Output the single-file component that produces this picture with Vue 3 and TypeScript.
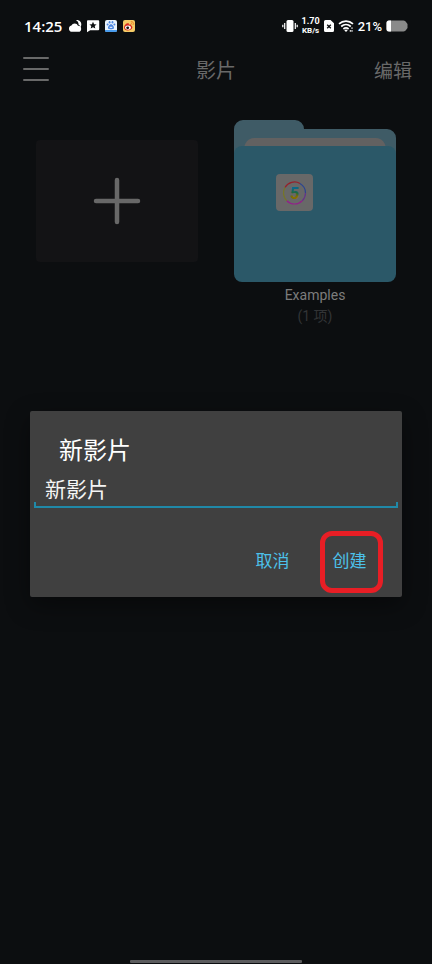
<script setup lang="ts">
import { ref } from 'vue'

interface Folder {
  name: string
  count: number
}

const folders: Folder[] = [{ name: 'Examples', count: 1 }]
const movieName = ref('新影片')
const dialogOpen = ref(true)
const battery = 21
</script>

<template>
  <div class="screen">
    <div class="status">
      <span class="clock">14:25</span>
      <svg class="glyph" width="14" height="14" viewBox="0 0 14 14" aria-hidden="true">
        <path d="M8 1.200C11 .6 13.600 3 13.300 5.800c0 1-.4 1.800-1 2.500A3.500 3.500 0 0 0 10.500 5.600 4.500 4.500 0 0 0 8 1.200Z" fill="#fff" />
        <path d="M4 12.800a3.200 3.200 0 0 1-.6-6.300 3.700 3.700 0 0 1 6.600.3 3 3 0 0 1 .3 6Z" fill="#fff" />
      </svg>
      <svg class="glyph" width="14" height="14" viewBox="0 0 14 14" aria-hidden="true">
        <path d="M1.800 1.300h10.400a1 1 0 0 1 1 1v8a1 1 0 0 1-1 1H4.200L1 13.300V2.300a1 1 0 0 1 .8-1Z" fill="#fff" />
        <path d="M7 2.800l1.100 2.400 2.500.2-1.900 1.700.6 2.500L7 8.300 4.700 9.600l.6-2.500-1.900-1.700 2.500-.2Z" fill="#0c0e10" />
      </svg>
      <svg class="glyph" width="14" height="14" viewBox="0 0 14 14" aria-hidden="true">
        <rect x="1" y="1" width="12" height="12" rx="2" fill="#e9f2fc" />
        <path d="M1 11h12v.500a1.500 1.500 0 0 1-1.500 1.500h-9A1.500 1.500 0 0 1 1 11.500Z" fill="#4a9cec" />
        <g fill="#4b86e2">
          <ellipse cx="5.600" cy="3.200" rx=".9" ry="1.300" />
          <ellipse cx="8.500" cy="3.200" rx=".9" ry="1.300" />
          <circle cx="3.600" cy="5.600" r="1" />
          <circle cx="10.400" cy="5.600" r="1" />
          <path d="M7 5.300c1.500 0 3.200 2.500 3 3.800-.2 1.300-1.700 1.100-3 1.100s-2.800.2-3-1.100c-.2-1.300 1.500-3.800 3-3.800Z" />
        </g>
        <path d="M5.700 8.300h2.600" stroke="#fff" stroke-width="1" />
      </svg>
      <svg class="glyph" width="14" height="14" viewBox="0 0 14 14" aria-hidden="true">
        <rect x="1" y="1" width="12" height="12" rx="2" fill="#f5cb67" />
        <path d="M2 8.400C2 6 5 3.600 6.500 4.300c.6.300.5 1 .3 1.400 1.300-.5 2.700-.4 2.500 1.100 2.300.9.800 4.700-3.500 4.700C3.600 11.500 2 10.200 2 8.400Z" fill="#d9291f" />
        <ellipse cx="6" cy="8.600" rx="2.900" ry="2.100" fill="#fff" />
        <circle cx="5.700" cy="8.800" r="1.400" fill="#18110e" />
        <path d="M8.800 2.700c2-.3 3.200 1.100 2.900 3M8.900 4.300c.9-.1 1.400.5 1.200 1.300" fill="none" stroke="#e8791d" stroke-width=".9" />
      </svg>
      <span class="spacer"></span>
      <svg class="glyph" width="16" height="14" viewBox="0 0 16 14" aria-hidden="true">
        <rect x="4.500" y="1" width="7" height="12" rx="1.500" fill="#fff" />
        <path d="M2.700 4v6M13.300 4v6M.8 5.800v2.400M15.200 5.800v2.400" stroke="#fff" stroke-width="1.200" />
      </svg>
      <span class="speed"><span class="rate">1.70</span><span>KB/s</span></span>
      <svg class="glyph" width="10" height="12" viewBox="0 0 10 12" aria-hidden="true">
        <path d="M1.500 0H6.500L10 3.300V10.500A1.500 1.500 0 0 1 8.500 12h-7A1.500 1.500 0 0 1 0 10.500v-9A1.500 1.500 0 0 1 1.500 0Z" fill="#fff" />
        <path d="M3.200 4.700l3.600 3.600M6.800 4.700L3.200 8.300" stroke="#0c0e10" stroke-width="1.300" />
      </svg>
      <svg class="glyph" width="16" height="14" viewBox="0 0 16 14" aria-hidden="true">
        <g fill="none" stroke="#fff" stroke-width="1.700">
          <path d="M1 4.800c4-3.700 10-3.700 14 0" />
          <path d="M3.200 7.500c2.800-2.500 6.800-2.500 9.600 0" />
          <path d="M5.400 10c1.500-1.300 3.700-1.300 5.200 0" />
        </g>
        <path d="M6.300 11.200a2.600 2.600 0 0 1 3.400 0L8 13Z" fill="#fff" />
        <path d="M14 8.300v1.700M14 11v1.800M12.300 11v1.800" stroke="#fff" stroke-width="1" />
      </svg>
      <span class="percent">{{ battery }}%</span>
      <svg class="battery" width="22" height="12" viewBox="0 0 22 12" aria-hidden="true">
        <path d="M3 .5h14.500a3 3 0 0 1 2.700 1.700L21.500 4v4l-1.300 1.800a3 3 0 0 1-2.700 1.700H3a2.500 2.500 0 0 1-2.500-2.500V3A2.500 2.500 0 0 1 3 .5Z" fill="#8a8a8a" />
        <path d="M3 .5h2v11H3A2.500 2.500 0 0 1 .5 9V3A2.500 2.500 0 0 1 3 .5Z" fill="#fff" />
      </svg>
    </div>

    <header class="bar">
      <button class="menu" type="button" aria-label="菜单">
        <span></span><span></span><span></span>
      </button>
      <h1>影片</h1>
      <button class="edit" type="button">编辑</button>
    </header>

    <main class="grid">
      <button class="add" type="button" aria-label="新建">
        <svg width="48" height="48" viewBox="0 0 48 48" aria-hidden="true">
          <path d="M24 3v42M3 24h42" stroke="#686868" stroke-width="4.500" stroke-linecap="round" />
        </svg>
      </button>
      <a v-for="f in folders" :key="f.name" class="folder" href="#">
        <svg viewBox="0 0 162 162" aria-hidden="true">
          <defs>
            <linearGradient id="digit" gradientUnits="userSpaceOnUse" x1="0" y1="67" x2="0" y2="79">
              <stop offset="0.100" stop-color="#08688c" />
              <stop offset="0.500" stop-color="#1f6a3c" />
              <stop offset="0.800" stop-color="#857000" />
            </linearGradient>
          </defs>
          <path d="M0 40V9a9 9 0 0 1 9-9H61a9 9 0 0 1 9 9H153a9 9 0 0 1 9 9V40Z" fill="#3f5b66" />
          <path d="M10 30c0-7 4-12 10-12H142c6 0 10 5 10 12Z" fill="#626161" />
          <rect y="26" width="162" height="136" rx="8" fill="#2b5868" />
          <rect x="42" y="54" width="37" height="37" rx="4" fill="#686868" />
          <g fill="none" stroke-width="1.200">
            <path d="M50.970 67.500A11 11 0 0 1 66 63.470" stroke="#96202b" />
            <path d="M66 63.470A11 11 0 0 1 71.500 73" stroke="#2c4590" />
            <path d="M71.500 73A11 11 0 0 1 68.280 80.780" stroke="#643488" />
            <path d="M68.280 80.780A11 11 0 0 1 52.720 80.780" stroke="#93208a" />
            <path d="M52.720 80.780A11 11 0 0 1 50.970 67.500" stroke="#767626" />
          </g>
          <text x="60.500" y="79" class="digit" text-anchor="middle" fill="url(#digit)">5</text>
        </svg>
        <span class="name">{{ f.name }}</span>
        <span class="count">({{ f.count }} 项)</span>
      </a>
    </main>

    <div class="home"></div>

    <div v-if="dialogOpen" class="overlay">
      <form class="dialog" role="dialog" aria-labelledby="dialog-title" @submit.prevent="dialogOpen = false">
        <h2 id="dialog-title"><label for="movie-name">新影片</label></h2>
        <div class="field">
          <input id="movie-name" v-model="movieName" type="text" autocomplete="off" />
        </div>
        <div class="actions">
          <button type="button" @click="dialogOpen = false">取消</button>
          <button class="create" type="submit">创建</button>
        </div>
      </form>
    </div>
  </div>
</template>

<style>
body {
  background: #0c0e10;
}
</style>

<style scoped>
.screen,
.screen * {
  box-sizing: border-box;
}
.screen {
  position: relative;
  display: flex;
  flex-direction: column;
  min-height: 100vh;
  background: #0c0e10;
  color: #696969;
  font-family: Roboto, "Noto Sans CJK SC", sans-serif;
}
button,
input {
  margin: 0;
  padding: 0;
  border: 0;
  background: none;
  color: inherit;
  font: inherit;
}
h1,
h2 {
  margin: 0;
}
.status {
  display: flex;
  align-items: center;
  gap: 4px;
  height: 52px;
  padding: 0 24px;
  color: #fff;
  font-weight: 500;
}
.clock {
  margin-right: 2px;
  font-family: "Open Sans", sans-serif;
  font-size: 15px;
  font-weight: 600;
}
.glyph,
.battery {
  flex: none;
}
.spacer {
  flex: 1;
}
.speed {
  display: flex;
  flex-direction: column;
  align-items: center;
  font-size: 8px;
  font-weight: 700;
  line-height: 9px;
}
.rate {
  font-size: 9px;
}
.percent {
  font-size: 13px;
}
.bar {
  display: grid;
  grid-template-columns: 1fr auto 1fr;
  align-items: center;
  height: 34px;
  padding: 0 20px;
}
.menu {
  display: flex;
  flex-direction: column;
  gap: 9px;
  width: 26px;
  margin-left: 3px;
}
.menu span {
  height: 2px;
  border-radius: 1px;
  background: #696969;
}
.bar h1 {
  font-size: 20px;
  font-weight: 400;
}
.edit {
  justify-self: end;
  font-size: 19px;
}
.grid {
  flex: 1;
  display: grid;
  grid-template-columns: 1fr 1fr;
  align-items: start;
  gap: 36px;
  padding: 34px 36px;
}
.add {
  display: flex;
  align-items: center;
  justify-content: center;
  margin-top: 20px;
  aspect-ratio: 4 / 3;
  border-radius: 4px;
  background: #131315;
}
.folder {
  display: flex;
  flex-direction: column;
  align-items: center;
  color: #7c7c7c;
  text-decoration: none;
}
.folder svg {
  display: block;
  width: 100%;
}
.digit {
  font: 700 16px Roboto, sans-serif;
}
.name {
  margin-top: 2px;
  font-size: 14px;
  line-height: 22px;
}
.count {
  color: #323436;
  font-size: 14px;
  line-height: 20px;
}
.home {
  align-self: center;
  width: 40%;
  height: 3px;
  margin-bottom: 1px;
  border-radius: 1px;
  background: #5c5c5e;
}
.overlay {
  position: absolute;
  inset: 0;
  display: flex;
  align-items: center;
  padding: 44px 30px 0;
}
.dialog {
  flex: 1;
  padding: 22px 4px 14px;
  border-radius: 2px;
  background: #404040;
  box-shadow: 0 8px 24px rgba(0, 0, 0, 0.4);
}
.dialog h2 {
  padding-left: 25px;
  color: #fff;
  font-size: 24px;
  font-weight: 400;
  line-height: 36px;
}
.field {
  border-bottom: 2px solid #2089a8;
  background:
    linear-gradient(#2089a8, #2089a8) left bottom / 2px 4px no-repeat,
    linear-gradient(#2089a8, #2089a8) right bottom / 2px 4px no-repeat;
}
.field input {
  display: block;
  width: 100%;
  height: 37px;
  padding: 0 11px;
  outline: none;
  color: #f4f4f4;
  font-size: 21px;
}
.actions {
  display: flex;
  justify-content: flex-end;
  margin-top: 27px;
  padding-right: 10px;
}
.actions button {
  position: relative;
  width: 77px;
  height: 48px;
  color: #4cc1ea;
  font-size: 17px;
}
.create::after {
  content: "";
  position: absolute;
  inset: -4px 5px -10px 9px;
  border: 5px solid #e81e25;
  border-radius: 12px;
}
</style>
